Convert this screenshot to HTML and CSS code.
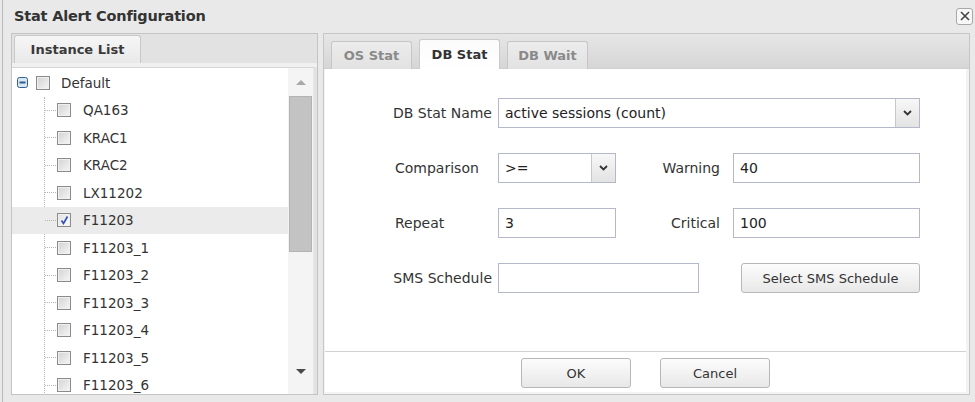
FILE: index.html
```html
<!DOCTYPE html>
<html>
<head>
<meta charset="utf-8">
<link rel="stylesheet" href="styles.css">
</head>
<body>
<div class="dialog">
  <div class="titlebar">
    <span class="title">Stat Alert Configuration</span>
    <span class="close"><svg width="12" height="12" viewBox="0 0 12 12"><path d="M2 2L10 10M10 2L2 10" stroke="#444" stroke-width="1.6"/></svg></span>
  </div>
  <div class="main">
    <div class="left">
      <div class="left-tabs"><div class="ltab">Instance List</div></div>
      <div class="left-body">
        <div class="tree">
          <div class="row root">
            <span class="expander"><svg width="11" height="11" viewBox="0 0 11 11"><rect x="0.5" y="0.5" width="10" height="10" rx="2" fill="#d9e6f2" stroke="#2f5f8f"/><rect x="2.5" y="4.5" width="6" height="2" fill="#2f5f8f"/></svg></span>
            <span class="cb"></span><span class="lbl">Default</span>
          </div>
          <div class="children">
            <div class="row child"><span class="cb"></span><span class="lbl">QA163</span></div>
            <div class="row child"><span class="cb"></span><span class="lbl">KRAC1</span></div>
            <div class="row child"><span class="cb"></span><span class="lbl">KRAC2</span></div>
            <div class="row child"><span class="cb"></span><span class="lbl">LX11202</span></div>
            <div class="row child sel"><span class="cb checked"><svg width="11" height="11" viewBox="0 0 11 11"><path d="M2.5 5.5L4.5 8.5L8.5 1.5" stroke="#2b4fb8" stroke-width="1.6" fill="none"/></svg></span><span class="lbl">F11203</span></div>
            <div class="row child"><span class="cb"></span><span class="lbl">F11203_1</span></div>
            <div class="row child"><span class="cb"></span><span class="lbl">F11203_2</span></div>
            <div class="row child"><span class="cb"></span><span class="lbl">F11203_3</span></div>
            <div class="row child"><span class="cb"></span><span class="lbl">F11203_4</span></div>
            <div class="row child"><span class="cb"></span><span class="lbl">F11203_5</span></div>
            <div class="row child"><span class="cb"></span><span class="lbl">F11203_6</span></div>
          </div>
        </div>
        <div class="scrollbar">
          <div class="arrow up"></div>
          <div class="track"><div class="thumb"></div></div>
          <div class="arrow down"></div>
        </div>
      </div>
    </div>
    <div class="right">
      <div class="right-tabs">
        <div class="tab">OS Stat</div>
        <div class="tab active">DB Stat</div>
        <div class="tab">DB Wait</div>
      </div>
      <div class="right-body">
        <div class="form">
          <div class="frow">
            <label class="flabel">DB Stat Name</label>
            <div class="select wide"><span class="val">active sessions (count)</span><span class="dd"><svg width="9" height="6" viewBox="0 0 9 6"><path d="M1 1L4.5 4.5L8 1" stroke="#333" stroke-width="1.8" fill="none"/></svg></span></div>
          </div>
          <div class="frow">
            <label class="flabel lalign">Comparison</label>
            <div class="select small"><span class="val">&gt;=</span><span class="dd"><svg width="9" height="6" viewBox="0 0 9 6"><path d="M1 1L4.5 4.5L8 1" stroke="#333" stroke-width="1.8" fill="none"/></svg></span></div>
            <label class="flabel2">Warning</label>
            <div class="input w2">40</div>
          </div>
          <div class="frow">
            <label class="flabel lalign">Repeat</label>
            <div class="input small">3</div>
            <label class="flabel2">Critical</label>
            <div class="input w2">100</div>
          </div>
          <div class="frow">
            <label class="flabel">SMS Schedule</label>
            <div class="input sms"></div>
            <button class="btn smsbtn">Select SMS Schedule</button>
          </div>
        </div>
      </div>
      <div class="footer">
        <button class="btn fbtn">OK</button>
        <button class="btn fbtn">Cancel</button>
      </div>
    </div>
  </div>
</div>
</body>
</html>
```
FILE: styles.css
```css
* { box-sizing: border-box; }
html, body { margin: 0; padding: 0; }
body {
  width: 975px;
  height: 402px;
  overflow: hidden;
  background: #e9e9e9;
  font-family: "DejaVu Sans", "Liberation Sans", sans-serif;
  color: #333;
}
.dialog {
  height: 402px;
  margin-left: 2px;
  border-left: 1px solid #b9b9b9;
  display: flex;
  flex-direction: column;
}
.titlebar {
  height: 33px;
  display: flex;
  align-items: center;
  justify-content: space-between;
  padding: 0 2px 1px 11px;
}
.title {
  font-size: 14.5px;
  font-weight: bold;
  color: #333;
  letter-spacing: -0.2px;
}
.close {
  width: 17px;
  height: 17px;
  border: 1px solid #a8a8a8;
  border-radius: 3px;
  background: #f7f7f7;
  display: flex;
  align-items: center;
  justify-content: center;
}
.main {
  display: flex;
  gap: 5px;
  padding-left: 8px;
  height: 362px;
}
.left {
  width: 307px;
  border: 1px solid #c4c4c4;
  background: #e2e2e2;
  display: flex;
  flex-direction: column;
}
.left-tabs {
  height: 33px;
  padding: 2px 0 0 2px;
  border-bottom: 4px solid #f0f0f0;
  display: flex;
  align-items: flex-end;
}
.ltab {
  width: 127px;
  height: 28px;
  border: 1px solid #c8c8c8;
  border-bottom: none;
  border-radius: 3px 3px 0 0;
  background: linear-gradient(#f6f6f6, #e9e9e9);
  font-size: 13px;
  font-weight: bold;
  color: #3a3a3a;
  display: flex;
  align-items: center;
  justify-content: center;
}
.left-body {
  flex: 1;
  display: flex;
  background: #fff;
  border-top: 1px solid #d6d6d6;
  margin-right: 3px;
  overflow: hidden;
}
.tree {
  width: 276px;
  padding-top: 1px;
  overflow: hidden;
}
.row {
  height: 27.5px;
  display: flex;
  align-items: center;
  font-size: 13.5px;
  color: #333;
}
.row.root { padding-left: 5px; }
.expander { width: 11px; height: 11px; display: flex; margin-right: 8px; }
.root .cb { margin-right: 11px; }
.children {
  margin-left: 32px;
  border-left: 1px dotted #b5b5b5;
}
.row.child::before {
  content: "";
  width: 11px;
  border-top: 1px dotted #b5b5b5;
  margin-right: 1px;
}
.child .cb { margin-right: 12px; }
.row.sel {
  background: #ebebeb;
  margin-left: -33px;
  padding-left: 33px;
}
.cb {
  width: 14px;
  height: 14px;
  border: 1px solid #8a8b8b;
  background: linear-gradient(135deg, #d2d2d2, #f6f6f6);
  box-shadow: inset 0 0 0 1px #f0f0f0;
  display: flex;
  align-items: center;
  justify-content: center;
  flex-shrink: 0;
}
.cb.checked { background: linear-gradient(135deg, #e0e0e0, #fdfdfd); }
.scrollbar {
  width: 26px;
  background: #f4f4f4;
  display: flex;
  flex-direction: column;
  align-items: center;
  border-right: 1px solid #e8e8e8;
}
.arrow {
  height: 28px;
  width: 100%;
  display: flex;
  align-items: center;
  justify-content: center;
}
.arrow::after {
  content: "";
  border-left: 5px solid transparent;
  border-right: 5px solid transparent;
}
.arrow.up::after { border-bottom: 5px solid #a8a8a8; }
.arrow.down::after { border-top: 5px solid #4a4a4a; }
.track {
  flex: 1;
  width: 100%;
  padding: 0 1px;
}
.thumb {
  height: 156px;
  background: #c3c3c3;
  border: 1px solid #b3b3b3;
}
.arrow.down { height: 38px; padding-bottom: 8px; }
.right {
  flex: 1;
  margin-right: 5px;
  border: 1px solid #c6c6c6;
  display: flex;
  flex-direction: column;
  background: #f3f3f3;
}
.right-tabs {
  height: 35px;
  background: linear-gradient(#e6e6e6, #d6d6d6);
  display: flex;
  align-items: flex-end;
  gap: 7px;
  padding-left: 7px;
  border-bottom: 1px solid #cfcfcf;
}
.tab {
  width: 81px;
  height: 28px;
  border: 1px solid #c6c6c6;
  border-bottom: none;
  border-radius: 3px 3px 0 0;
  background: linear-gradient(#ececec, #e2e2e2);
  color: #8a8a8a;
  font-size: 13px;
  font-weight: bold;
  display: flex;
  align-items: center;
  justify-content: center;
  margin-bottom: -1px;
}
.tab.active {
  background: linear-gradient(#fbfbfb, #ffffff);
  color: #333;
  height: 30px;
  border-color: #cacaca;
}
.right-body {
  height: 283px;
  background: #fff;
  margin: 0 3px 0 1px;
  border-bottom: 1px solid #d2d2d2;
}
.form {
  padding: 29px 0 0 47px;
  display: flex;
  flex-direction: column;
  gap: 25px;
}
.frow {
  display: flex;
  align-items: center;
  height: 30px;
}
.flabel {
  width: 120px;
  text-align: right;
  font-size: 14px;
  margin-right: 6px;
  color: #333;
}
.flabel.lalign { text-align: left; padding-left: 23px; }
.flabel2 {
  width: 104px;
  text-align: right;
  font-size: 14px;
  margin-right: 13px;
  color: #333;
}
.select, .input {
  height: 30px;
  border: 1px solid #b5b8c8;
  background: #fff;
  display: flex;
  align-items: center;
  font-size: 14px;
  color: #222;
  padding-left: 6px;
}
.select { padding-right: 0; justify-content: space-between; }
.select.wide { width: 422px; }
.select.small { width: 118px; }
.input.small { width: 118px; }
.input.w2 { width: 187px; }
.input.sms { width: 201px; }
.dd {
  width: 24px;
  height: 28px;
  border-left: 1px solid #c8c8c8;
  background: linear-gradient(#f7f7f7, #e3e3e3);
  display: flex;
  align-items: center;
  justify-content: center;
}
.btn {
  height: 30px;
  border: 1px solid #b7b7b7;
  border-radius: 3px;
  background: linear-gradient(#fcfcfc, #e8e8e8);
  font-family: "DejaVu Sans", "Liberation Sans", sans-serif;
  font-size: 13px;
  color: #333;
  padding: 0;
}
.smsbtn { width: 179px; margin-left: 42px; }
.footer {
  flex: 1;
  background: #fff;
  margin: 0 3px 2px 1px;
  display: flex;
  justify-content: center;
  align-items: flex-start;
  padding-top: 6px;
  gap: 29px;
}
.fbtn { width: 110px; }
```
